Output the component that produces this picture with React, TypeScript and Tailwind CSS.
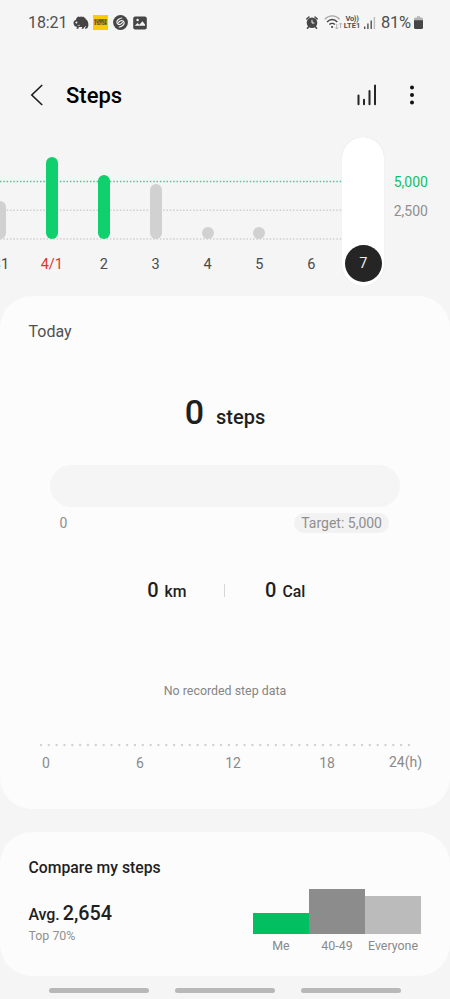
const days = [
  { label: "31", height: "h-[38px]", bar: "bg-[#d1d1d1]", text: "text-[#4a4a4a] pl-0.5" },
  { label: "4/1", height: "h-[82px]", bar: "bg-[#10d06e]", text: "text-[#e0342f]" },
  { label: "2", height: "h-[64px]", bar: "bg-[#10d06e]", text: "text-[#4a4a4a]" },
  { label: "3", height: "h-[55px]", bar: "bg-[#d1d1d1]", text: "text-[#4a4a4a]" },
  { label: "4", height: "h-[12px]", bar: "bg-[#d1d1d1]", text: "text-[#4a4a4a]" },
  { label: "5", height: "h-[12px]", bar: "bg-[#d1d1d1]", text: "text-[#4a4a4a]" },
  { label: "6", height: "h-0", bar: "", text: "text-[#4a4a4a]" },
];

const groups = [
  { label: "Me", height: "h-[21px]", bar: "bg-[#02c062]" },
  { label: "40-49", height: "h-[45px]", bar: "bg-[#8c8c8c]" },
  { label: "Everyone", height: "h-[38px]", bar: "bg-[#bbbbbb]" },
];

function StatusBar() {
  return (
    <div className="flex h-[45px] items-center justify-between pl-[28px] pr-[27px] text-[#505050]">
      <div className="flex items-center">
        <span className="w-[44px] text-base leading-none tracking-[-0.1px]">18:21</span>
        {/* chameleon */}
        <svg width="16" height="15" viewBox="0 0 16 15" className="ml-px" fill="#444">
          <path d="M0.5 8.5C0.3 6.5 1.5 5 3 4.8C3.2 3 4.5 1.5 6 1.4L7 2.2L8 1.2L9 2.1L10.3 1.5L11 2.6L12.2 2.7L12.6 4C14.5 5.2 15.6 7.5 15.4 10C15.3 12.5 14 14 12.6 13.7C11.7 13.5 11.7 12.3 12.6 12.2L13.4 11.4L12.5 11.2L11 12.4L10.5 13.8H8.6L9.2 12L5.8 12.1L5.4 13.8H3.4L4 12L1.5 11Z" />
          <circle cx="3.4" cy="7.4" r="1" fill="#f5f5f5" />
          <path d="M4.7 10.4H7" stroke="#f5f5f5" strokeWidth="0.6" />
        </svg>
        <div className="ml-1 flex h-[15px] w-[15px] flex-col items-center justify-center bg-[#ffc90a] text-[3px] font-black leading-[3px] text-[#333]">
          <span>NUMBER</span>
          <span>STATION</span>
        </div>
        {/* shazam */}
        <svg width="15" height="15" viewBox="0 0 15 15" className="ml-[5px]" fill="none">
          <circle cx="7.5" cy="7.5" r="7.4" fill="#464646" />
          <path d="M8.8 3C6.8 3.2 4.2 4.8 3.9 6.6C3.6 8.6 5.6 9.9 7.3 9.2C8.2 8.8 9 8.2 9.4 7.5M6.2 12C8.2 11.8 10.8 10.2 11.1 8.4C11.4 6.4 9.4 5.1 7.7 5.8C6.8 6.2 6 6.8 5.6 7.5" stroke="#f5f5f5" strokeWidth="1.2" strokeLinecap="round" />
        </svg>
        <svg width="14" height="14" viewBox="0 0 14 14" className="ml-[5px]">
          <rect x="0.2" y="0.4" width="13.6" height="13.2" rx="2" fill="#464646" />
          <path d="M2 9.5L4.5 7L6.3 8.7L9.5 5.3L12 8.5V9.8H2Z" fill="#f5f5f5" />
          <circle cx="4.6" cy="4" r="1.2" fill="#f5f5f5" />
        </svg>
      </div>
      <div className="flex items-center">
        <svg width="12" height="13" viewBox="0 0 12 13" fill="none">
          <circle cx="6" cy="6.7" r="5.3" fill="#464646" />
          <path d="M0.9 2.9L3 1M11.1 2.9L9 1M2.8 10.5L1.4 12.2M9.2 10.5L10.6 12.2" stroke="#464646" strokeWidth="1.5" strokeLinecap="round" />
          <path d="M6 3.8V7H8.4" stroke="#f5f5f5" strokeWidth="1" />
        </svg>
        <svg width="19" height="15" viewBox="0 0 19 15" className="ml-1.5" fill="none">
          <path d="M0.7 4.3C5 -0.2 11.5 -0.2 15.6 4.3" stroke="#aaa" strokeWidth="1.3" />
          <path d="M3 7C6.2 3.7 10.3 3.7 13.3 7M5.4 9.6C7.1 7.9 9.2 7.9 10.9 9.6" stroke="#464646" strokeWidth="1.4" />
          <circle cx="8.1" cy="12" r="1.1" fill="#464646" />
          <path d="M12.7 9V14M11.2 12.5L12.7 14L14.2 12.5M16.6 13V8M15.1 9.5L16.6 8L18.1 9.5" stroke="#aaa" strokeWidth="0.9" />
        </svg>
        <div className="ml-px flex w-[17px] flex-col items-center gap-px text-[7.5px] font-bold leading-[6px]">
          <span className="tracking-[-0.3px]">Vo))</span>
          <span>LTE1</span>
        </div>
        <svg width="12" height="12" viewBox="0 0 12 12" className="ml-[3px]" fill="#505050">
          <rect x="0" y="9.5" width="1.4" height="2.5" />
          <rect x="3.2" y="6.5" width="1.4" height="5.5" />
          <rect x="6.5" y="3.5" width="1.4" height="8.5" />
          <rect x="9.7" y="0" width="1.4" height="12" fill="#bbb" />
        </svg>
        <span className="ml-[5.5px] mt-px w-[32px] whitespace-nowrap text-[16.5px] leading-none tracking-[-0.3px]">81%</span>
        <svg width="9" height="13" viewBox="0 0 9 13" className="ml-px">
          <path d="M3 0.2H6V1.5H7.5Q9 1.5 9 3V5H0V3Q0 1.5 1.5 1.5H3Z" fill="#b5b5b5" />
          <path d="M0 4.2H9V11.5Q9 13 7.5 13H1.5Q0 13 0 11.5Z" fill="#464646" />
        </svg>
      </div>
    </div>
  );
}

function Header() {
  return (
    <header className="flex h-[92px] items-center pl-[30px] pr-[35px] pt-2">
      <svg width="14" height="22" viewBox="0 0 14 22" fill="none">
        <path d="M12.2 1L1.8 11L12.2 21" stroke="#1c1c1c" strokeWidth="1.6" />
      </svg>
      <h1 className="ml-[22px] mt-0.5 flex-1 text-[22px] font-medium leading-none text-black">Steps</h1>
      <svg width="20" height="22" viewBox="0 0 20 22" stroke="#252525" strokeWidth="2" strokeLinecap="round">
        <path d="M1.5 11.5V20.2M7 15.8V20.2M12.5 7V20.2M18 1.5V20.2" />
      </svg>
      <svg width="6" height="20" viewBox="0 0 6 20" className="ml-8" fill="#111">
        <circle cx="3" cy="2.5" r="2" />
        <circle cx="3" cy="10" r="2" />
        <circle cx="3" cy="17.4" r="2" />
      </svg>
    </header>
  );
}

function WeekChart() {
  return (
    <section className="relative flex h-[149px] overflow-hidden">
      {/* guide lines behind the bars */}
      <svg width="342" height="149" className="absolute left-0 top-0" strokeDasharray="1.5 1.83" strokeWidth="1.4">
        <path d="M0 44.5H342" stroke="#4cc997" />
        <path d="M0 73.2H342" stroke="#cfcfcf" />
        <path d="M0 102H342" stroke="#cfcfcf" />
      </svg>
      <div className="relative -ml-[26px] flex">
        {days.map((day) => (
          <div key={day.label} className="flex w-[51.9px] flex-col items-center">
            <div className="flex h-[102px] items-end">
              <div className={`w-3 rounded-full ${day.height} ${day.bar}`} />
            </div>
            <span className={`mt-4 text-[14.5px] leading-5 ${day.text}`}>{day.label}</span>
          </div>
        ))}
      </div>
      <div className="relative ml-[5px] flex h-[149px] w-[42px] items-end justify-center rounded-full bg-white pb-1 shadow-[0_0_1px_rgba(0,0,0,0.15)]">
        <div className="flex h-[37px] w-[37px] items-center justify-center rounded-full bg-[#252525] pt-px text-[14.5px] text-[#ededed]">7</div>
      </div>
      <div className="ml-[9.5px] flex flex-col pt-[35px] text-sm leading-5">
        <span className="text-[#10c068]">5,000</span>
        <span className="mt-[9px] text-[#8f8f8f]">2,500</span>
      </div>
    </section>
  );
}

function Today() {
  return (
    <section className="mt-[10px] flex h-[513px] flex-col rounded-[32px] bg-[#fcfcfc] text-[#1f1f1f]">
      <h2 className="ml-[28.5px] mt-[26px] text-base leading-5 text-[#505050]">Today</h2>
      <div className="mt-[45px] flex items-baseline justify-center">
        <span className="text-[34px] font-medium leading-[50px]">0</span>
        <span className="ml-3 text-[20px] font-medium">steps</span>
      </div>
      <div className="mx-[50px] mt-[28px] h-[42px] rounded-full bg-[#f5f5f5]" />
      <div className="ml-[59.5px] mr-[61px] mt-[6px] flex justify-between text-sm leading-5 text-[#8f8f8f]">
        <span>0</span>
        <span className="rounded-full bg-[#f2f2f2] px-[7px]">Target: 5,000</span>
      </div>
      <div className="mt-[43px] flex h-7 items-center font-medium">
        <div className="flex w-[186.5px] items-baseline justify-end">
          <span className="text-xl">0</span>
          <span className="ml-1.5 text-[15.8px]">km</span>
        </div>
        <div className="ml-[37.5px] mr-10 h-[13px] w-px bg-[#d6d6d6]" />
        <div className="flex flex-1 items-baseline">
          <span className="text-xl">0</span>
          <span className="ml-1.5 text-[15.8px]">Cal</span>
        </div>
      </div>
      <p className="mt-[77px] text-center text-[12.4px] leading-5 text-[#858585]">No recorded step data</p>
      <svg width="374" height="4" className="ml-[39px] mt-[42px]">
        <path d="M2 2H371" stroke="#d2d2d2" strokeWidth="2.4" strokeLinecap="round" strokeDasharray="0 7.83" />
      </svg>
      <div className="ml-[36px] mt-1.5 flex text-center text-sm leading-5 text-[#8a8a8a]">
        <span className="w-5">0</span>
        <span className="ml-[74px] w-5">6</span>
        <span className="ml-[73px] w-5">12</span>
        <span className="ml-[74px] w-5">18</span>
        <span className="-mt-px ml-[52px]">24(h)</span>
      </div>
    </section>
  );
}

function Compare() {
  return (
    <section className="mt-[23px] flex h-[144px] justify-between rounded-[32px] bg-[#fcfcfc] pl-[28.5px] pr-[29px]">
      <div className="pt-[26px] text-[#1f1f1f]">
        <h2 className="whitespace-nowrap text-[15.75px] font-medium leading-5">Compare my steps</h2>
        <div className="mt-[22px] flex items-baseline font-medium leading-7">
          <span className="text-base tracking-[-0.1px]">Avg.</span>
          <span className="ml-[3px] text-[19.8px]">2,654</span>
        </div>
        <p className="-mt-px text-[12.4px] leading-[18px] text-[#919191]">Top 70%</p>
      </div>
      <div className="flex h-[124px] items-end">
        {groups.map((group) => (
          <div key={group.label} className="flex w-[56px] flex-col items-center">
            <div className={`w-full ${group.height} ${group.bar}`} />
            <span className="mb-px mt-0.5 text-[12.4px] leading-[19px] text-[#8a8a8a]">{group.label}</span>
          </div>
        ))}
      </div>
    </section>
  );
}

export default function App() {
  return (
    <main className="flex h-[999px] w-[450px] flex-col overflow-hidden bg-[#f5f5f5] font-['Roboto',sans-serif]">
      <StatusBar />
      <Header />
      <WeekChart />
      <Today />
      <Compare />
      {/* gesture hints */}
      <div className="mt-3 flex justify-center gap-[26px]">
        <div className="h-[5px] w-[100px] rounded-full bg-[#b8b8b8]" />
        <div className="h-[5px] w-[100px] rounded-full bg-[#b8b8b8]" />
        <div className="h-[5px] w-[100px] rounded-full bg-[#b8b8b8]" />
      </div>
    </main>
  );
}
